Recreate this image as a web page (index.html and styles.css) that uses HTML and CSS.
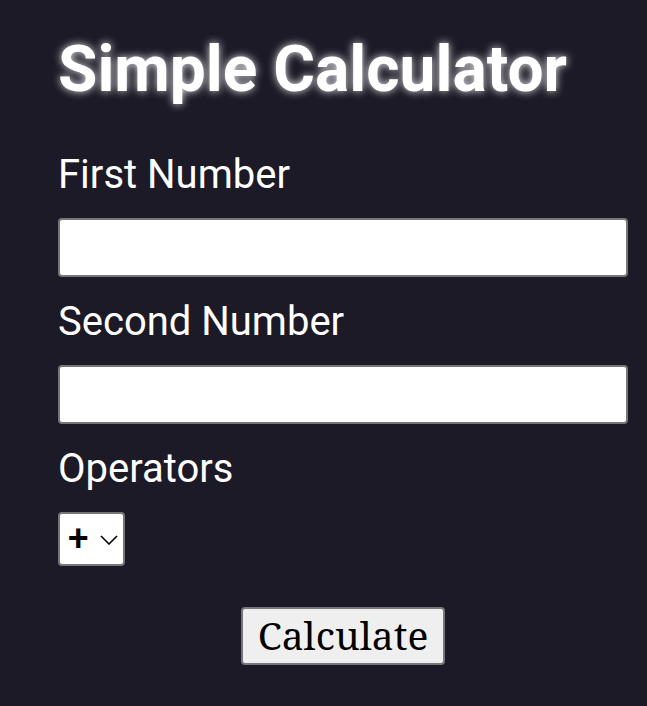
FILE: index.html
```html
<!DOCTYPE html>
<html>
<head>
<meta charset="utf-8">
<link rel="stylesheet" href="styles.css">
</head>
<body>
<div class="calc">
  <h1 class="title">Simple Calculator</h1>
  <label class="label" for="a">First Number</label>
  <input class="field" id="a" type="text">
  <label class="label" for="b">Second Number</label>
  <input class="field" id="b" type="text">
  <label class="label" for="op">Operators</label>
  <div class="op-row">
    <select class="select" id="op">
      <option>+</option>
      <option>-</option>
      <option>*</option>
      <option>/</option>
    </select>
  </div>
  <div class="btn-row">
    <button class="btn">Calculate</button>
  </div>
</div>
</body>
</html>
```
FILE: styles.css
```css
html, body {
  margin: 0;
  padding: 0;
  background: #1b1a26;
}
body {
  font-family: Roboto, "Noto Sans", sans-serif;
  color: #ffffff;
}
.calc {
  width: 570px;
  padding: 30px 0 0 58px;
  display: flex;
  flex-direction: column;
}
.title {
  margin: 0 0 41px 0;
  font-size: 64px;
  font-weight: 700;
  line-height: 80px;
  text-shadow: 0 0 8px rgba(255,255,255,0.9);
}
.label {
  font-size: 40px;
  line-height: 48px;
  margin-bottom: 19px;
}
.field {
  box-sizing: border-box;
  width: 570px;
  height: 59px;
  border: 2px solid #767676;
  border-radius: 4px;
  background: #fff;
  margin: 0 0 21px 0;
  padding: 0 8px;
  font-size: 24px;
}
.op-row {
  display: flex;
}
.select {
  -webkit-appearance: none;
  appearance: none;
  box-sizing: border-box;
  height: 54px;
  width: 67px;
  padding: 0 0 0 8px;
  font-family: Roboto, sans-serif;
  font-size: 37px;
  font-weight: 500;
  line-height: 50px;
  border: 2px solid #767676;
  border-radius: 4px;
  color: #000;
  background: #fff url("data:image/svg+xml;utf8,<svg xmlns='http://www.w3.org/2000/svg' width='18' height='10' viewBox='0 0 18 10'><path d='M1 1 L9 9 L17 1' fill='none' stroke='black' stroke-width='1.6'/></svg>") no-repeat 40px 21px;
}
.btn-row {
  display: flex;
  justify-content: center;
  margin-top: 41px;
}
.btn {
  font-family: "Noto Serif", "DejaVu Serif", serif;
  font-size: 39px;
  line-height: 50px;
  height: 58px;
  padding: 0 15px 2px 15px;
  border: 2px solid #767676;
  border-radius: 4px;
  background: #efefef;
  color: #000;
}
```
